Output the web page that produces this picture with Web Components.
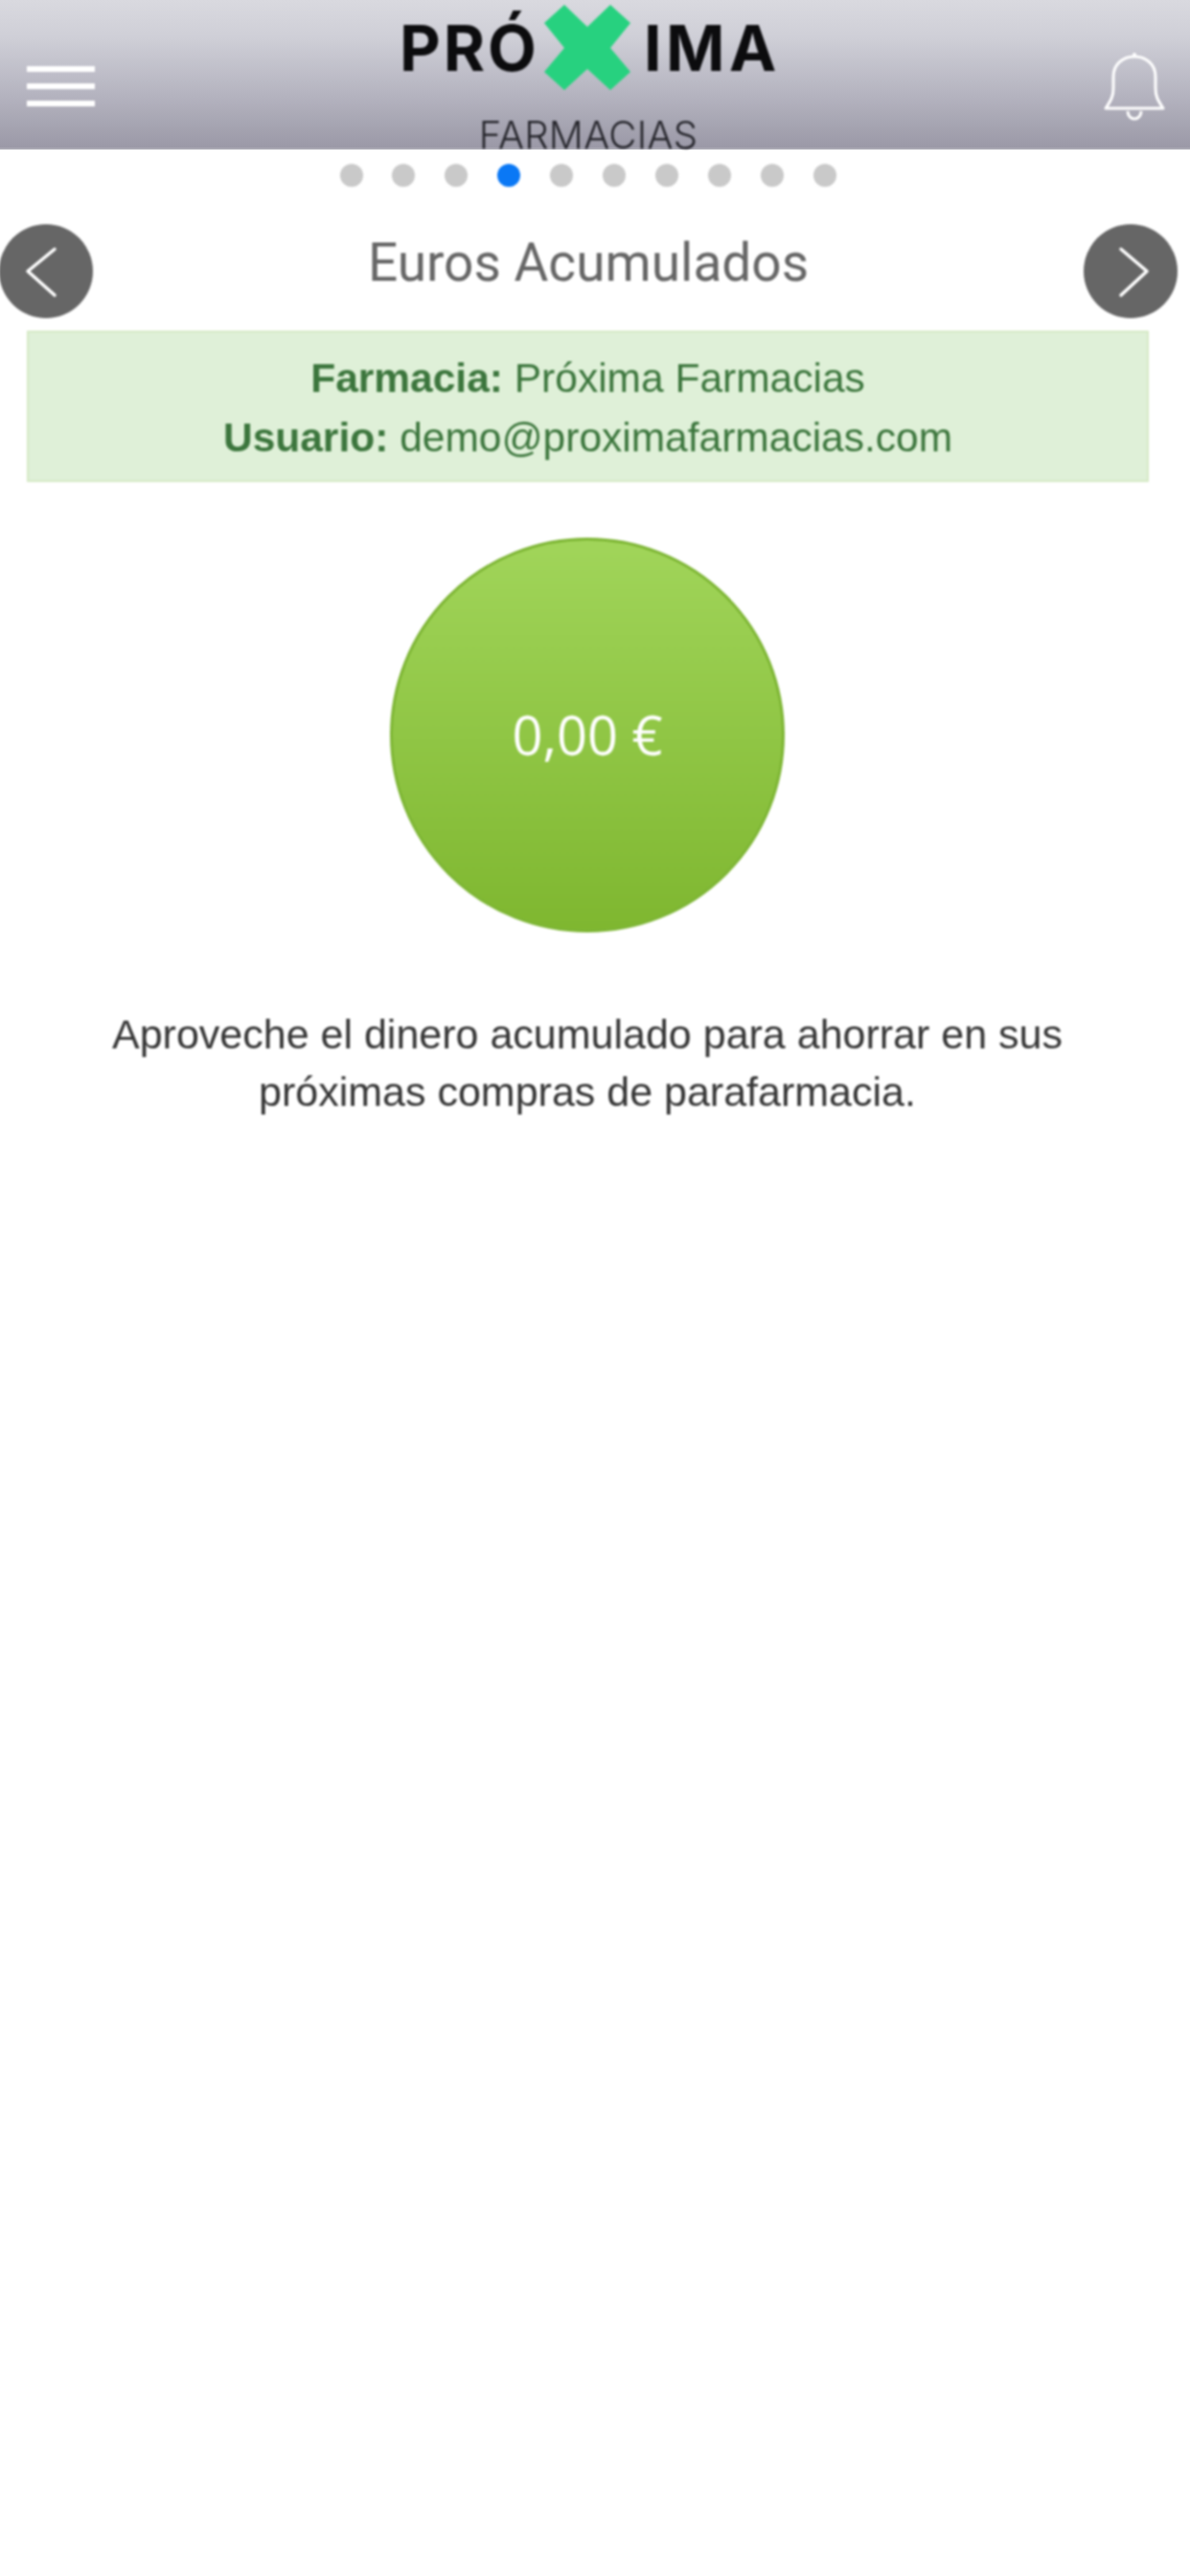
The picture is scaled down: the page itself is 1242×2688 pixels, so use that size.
<!DOCTYPE html>
<html lang="es"><head><meta charset="utf-8"><title>Euros Acumulados</title>
<style>
html,body{margin:0;padding:0;background:#fff}
body{width:1242px;min-height:2688px;overflow:hidden;font-family:"Liberation Sans",Arial,sans-serif;display:flex;flex-direction:column}
body>*:not(app-header){filter:blur(1px)}
</style></head><body>
<app-header></app-header>
<pager-dots count="10" active="3"></pager-dots>
<nav-title>Euros Acumulados</nav-title>
<info-alert>
  <div><b>Farmacia:</b> Próxima Farmacias</div>
  <div><b>Usuario:</b> demo@proximafarmacias.com</div>
</info-alert>
<amount-circle>0,00 €</amount-circle>
<note-text>Aproveche el dinero acumulado para ahorrar en sus<br>próximas compras de parafarmacia.</note-text>
<script>
function def(name,html,init){
  customElements.define(name,class extends HTMLElement{
    constructor(){super();this.attachShadow({mode:'open'}).innerHTML=html;}
    connectedCallback(){if(init)init(this);}
  });
}
def('proxima-logo',`<style>
:host{display:flex;flex-direction:column;align-items:center;width:391px;height:154px;padding-top:5px;box-sizing:border-box;font-family:Inter,sans-serif;filter:blur(1px)}
.top{display:flex;align-items:flex-start;height:89px;width:100%}
.w{flex:none;font-weight:700;font-size:66px;line-height:1;color:#0c0c0e;margin-top:12px;white-space:nowrap}
.a{letter-spacing:3px;width:151px}
.b{letter-spacing:4.5px;margin-left:14px}
svg{flex:none;display:block}
.sub{font-size:40px;font-weight:300;line-height:30px;letter-spacing:.3px;color:#26262c;margin-top:32px;margin-left:3px;white-space:nowrap}
</style><div class="top"><span class="w a">PRÓ</span>
<svg width="90" height="89" viewBox="0 0 90 89"><path fill="#27d17f" d="M21 0 45 23 69 0 90 19 69 45 90 70 69 89 45 67 21 89 0 70 21 45 0 19Z"/></svg>
<span class="w b">IMA</span></div><div class="sub">FARMACIAS</div>`);

def('app-header',`<style>
:host{display:grid;grid-template-columns:389px 391px 1fr;height:156px;box-sizing:border-box;padding:0 26px 0 28px;background:linear-gradient(#d9d9df 0%,#cfcfd7 25%,#b4b3bf 65%,#9b99a7 100%);border-bottom:2px solid #a9a8b3;align-items:start}
.menu{display:flex;flex-direction:column;gap:12.5px;width:71px;margin-top:69px;filter:blur(.8px)}
.menu i{display:block;height:5.5px;background:#fff}
.bell{justify-self:end;margin-top:54px;display:block;filter:blur(.8px)}
</style>
<div class="menu"><i></i><i></i><i></i></div>
<proxima-logo></proxima-logo>
<svg class="bell" width="64" height="72" viewBox="0 0 64 72" fill="none" stroke="#fff" stroke-width="3"><circle cx="32" cy="3" r="2" fill="#fff" stroke="none"/><path d="M2 59H62C56 50 54 46 54 38V26C54 13 44 5 32 5S10 13 10 26V38C10 46 8 50 2 59Z" stroke-linejoin="round"/><path d="M25 62A7 8 0 0 0 39 62"/></svg>`);

def('pager-dots',`<style>
:host{display:flex;justify-content:flex-start;gap:30.9px;padding:15px 0 0 354.5px;height:24px}
i{width:24px;height:24px;border-radius:50%;background:#c9c9c9;flex:none;display:block}
i.on{background:#0a78f5}
</style><span id="r" style="display:contents"></span>`,el=>{
  const r=el.shadowRoot.getElementById('r');
  if(r.children.length)return;
  const n=+el.getAttribute('count'),a=+el.getAttribute('active');
  for(let k=0;k<n;k++){const d=document.createElement('i');if(k===a)d.className='on';r.append(d);}
});

def('nav-title',`<style>
:host{display:grid;grid-template-columns:98px 1fr 98px;align-items:center;height:98px;margin:39px 13px 0 -1px}
.b{width:98px;height:98px;border-radius:50%;background:#666;display:block}
.t{font-family:Roboto,sans-serif;font-weight:400;font-size:55px;line-height:98px;color:#666;text-align:center;margin-top:-18px}
</style>
<svg class="b" viewBox="0 0 98 98" fill="none" stroke="#fff" stroke-width="3.5" stroke-linecap="round" stroke-linejoin="round"><path d="M58 26 30 49 58 74"/></svg>
<div class="t"><slot></slot></div>
<svg class="b" viewBox="0 0 98 98" fill="none" stroke="#fff" stroke-width="3.5" stroke-linecap="round" stroke-linejoin="round"><path d="M39 26 66 49 39 74"/></svg>`);

def('info-alert',`<style>
:host{display:block;box-sizing:border-box;height:158px;margin:13px 43px 0 28px;padding:17px 0 0;background:#dff0d8;border:2px solid #d6e9c6;color:#3c763d;font-size:42.5px;line-height:62px;text-align:center}
</style><slot></slot>`);

def('amount-circle',`<style>
:host{display:flex;align-items:center;justify-content:center;box-sizing:border-box;width:412px;height:412px;margin:58px 0 0 407px;padding-bottom:2px;border-radius:50%;border:3px solid #7eb635;background:linear-gradient(#a1d55a,#7fb730);color:#fff;font-family:"Open Sans",sans-serif;font-size:56px;line-height:1}
</style><slot></slot>`);

def('note-text',`<style>
:host{display:block;margin-top:76px;width:1226px;text-align:center;font-size:43px;line-height:60px;color:#363636}
</style><slot></slot>`);
</script>
</body></html>
